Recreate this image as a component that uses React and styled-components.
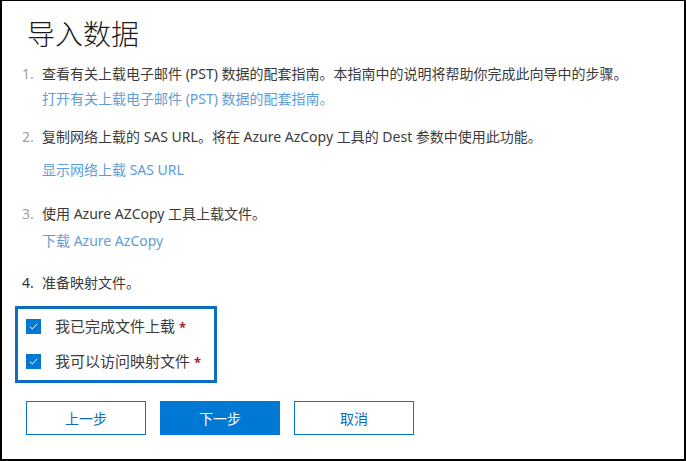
import styled, { createGlobalStyle } from 'styled-components'

const Global = createGlobalStyle`
  html, body { margin: 0; padding: 0; background: #fff; }
  * { box-sizing: border-box; }
`

const FONT = `"Segoe UI", "Noto Sans", "Noto Sans CJK SC", sans-serif`

const steps = [
    { n: '1.', text: '查看有关上载电子邮件 (PST) 数据的配套指南。本指南中的说明将帮助你完成此向导中的步骤。', link: '打开有关上载电子邮件 (PST) 数据的配套指南。', top: 0, linkTop: 5, faded: true },
    { n: '2.', text: '复制网络上载的 SAS URL。将在 Azure AzCopy 工具的 Dest 参数中使用此功能。', link: '显示网络上载 SAS URL', top: 18, linkTop: 13, faded: true },
    { n: '3.', text: '使用 Azure AZCopy 工具上载文件。', link: '下载 Azure AzCopy', top: 24, linkTop: 7, faded: true },
    { n: '4.', text: '准备映射文件。', top: 22 },
]

const checks = ['我已完成文件上载', '我可以访问映射文件']

const Check = () => (
    <Box>
        <svg width="9" height="7" viewBox="0 0 9 7" fill="none">
            <path d="M0.8 3.6 L3.3 6 L8.2 0.8" stroke="#fff" strokeWidth="1" />
        </svg>
    </Box>
)

const App = () => {
    return (
        <>
            <Global />
            <Frame>
                <Title>导入数据</Title>
                <Steps>
                    {steps.map((s) => (
                        <Step key={s.n} $top={s.top}>
                            <Row>
                                <Num $faded={s.faded}>{s.n}</Num>
                                <Text>{s.text}</Text>
                            </Row>
                            {s.link && <Link $top={s.linkTop}>{s.link}</Link>}
                        </Step>
                    ))}
                </Steps>
                <Group>
                    {checks.map((c) => (
                        <CheckRow key={c}>
                            <Check />
                            <Label>{c}<Req>*</Req></Label>
                        </CheckRow>
                    ))}
                </Group>
                <Buttons>
                    <Button>上一步</Button>
                    <Button $primary>下一步</Button>
                    <Button>取消</Button>
                </Buttons>
            </Frame>
        </>
    )
}

export default App

const Frame = styled.div`
    width: 686px;
    height: 461px;
    border: 2px solid #000;
    border-top-width: 1px;
    padding: 15px 0 0 13px;
    display: flex;
    flex-direction: column;
    font-family: ${FONT};
    background: #fff;
`

const Title = styled.h1`
    margin: 0 0 0 12px;
    font-size: 28px;
    line-height: 36px;
    font-weight: 300;
    color: #1b1b1b;
`

const Steps = styled.div`
    margin-top: 12px;
    padding-left: 7px;
    display: flex;
    flex-direction: column;
`

const Step = styled.div`
    margin-top: ${(p) => p.$top}px;
    display: flex;
    flex-direction: column;
`

const Row = styled.div`
    display: flex;
    font-size: 14px;
    line-height: 20px;
    color: #3b3b3b;
`

const Num = styled.span`
    width: 20px;
    flex: none;
    color: ${(p) => (p.$faded ? '#a0a0a0' : '#333')};
`

const Text = styled.span`
    white-space: nowrap;
`

const Link = styled.a`
    margin-top: ${(p) => p.$top}px;
    margin-left: 20px;
    font-size: 14px;
    line-height: 20px;
    color: #5e9dd6;
    white-space: nowrap;
`

const Group = styled.div`
    margin-top: 13px;
    width: 202px;
    border: 3px solid #0b6ec2;
    padding: 5px 8px 6px 8px;
    display: flex;
    flex-direction: column;
    gap: 10px;
`

const CheckRow = styled.div`
    height: 25px;
    display: flex;
    align-items: center;
    gap: 14px;
`

const Box = styled.span`
    width: 15px;
    height: 15px;
    flex: none;
    background: #0078d4;
    display: flex;
    align-items: center;
    justify-content: center;
`

const Label = styled.span`
    font-size: 15px;
    line-height: 20px;
    color: #3b3b3b;
    white-space: nowrap;
`

const Req = styled.span`
    margin-left: 4px;
    font-size: 13px;
    color: #a4262c;
    font-weight: 700;
`

const Buttons = styled.div`
    margin: 18px 0 0 11px;
    display: flex;
    gap: 14px;
`

const Button = styled.button`
    width: 120px;
    height: 34px;
    border: 1px solid #0078d4;
    background: ${(p) => (p.$primary ? '#0078d4' : '#fff')};
    color: ${(p) => (p.$primary ? '#fff' : '#0a6cc0')};
    font-family: ${FONT};
    font-size: 14px;
    padding: 0;
`
